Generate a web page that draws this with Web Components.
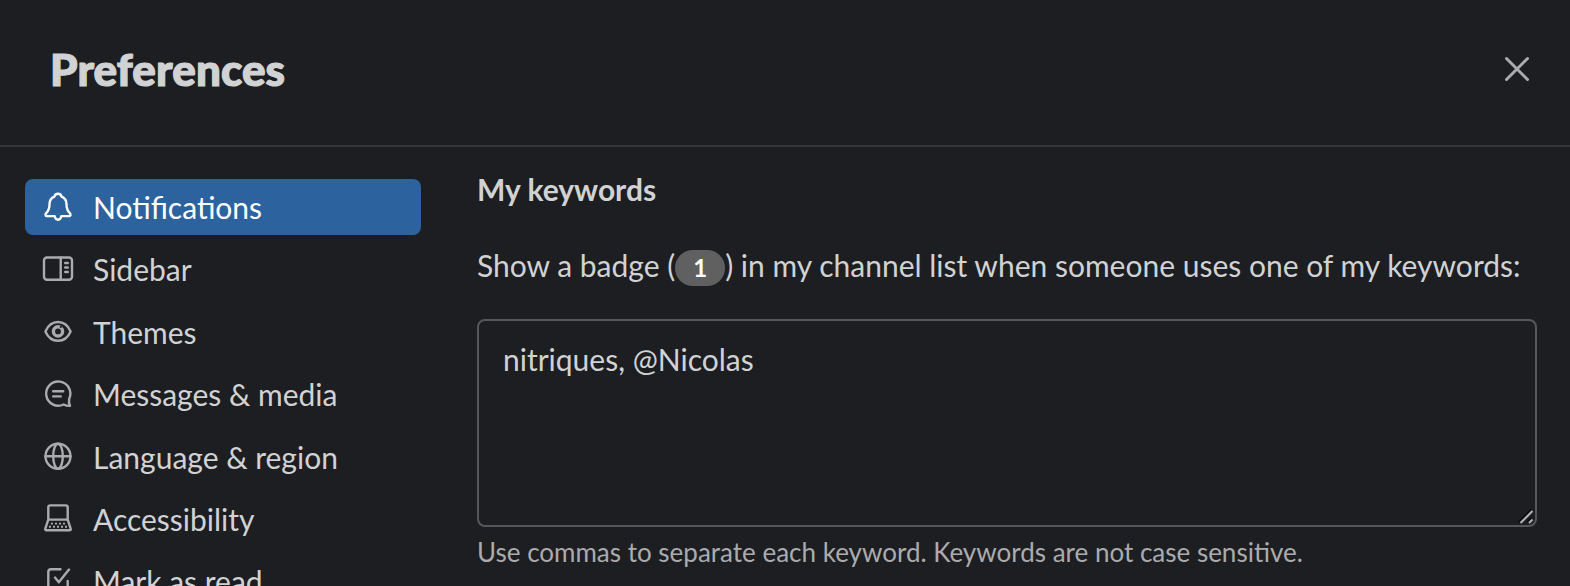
<!DOCTYPE html>
<html lang="en">
<head>
<meta charset="utf-8">
<title>Preferences</title>
<style>
html,body{margin:0;height:100%;background:#1d1e22;overflow:hidden}
body{font-family:Lato,sans-serif;color:#d1d2d3;font-size:30px}
</style>
</head>
<body>
<pref-dialog>
  <span slot="title">Preferences</span>
  <pref-item slot="nav" icon="bell" active>Notifications</pref-item>
  <pref-item slot="nav" icon="sidebar">Sidebar</pref-item>
  <pref-item slot="nav" icon="eye">Themes</pref-item>
  <pref-item slot="nav" icon="message">Messages &amp; media</pref-item>
  <pref-item slot="nav" icon="globe">Language &amp; region</pref-item>
  <pref-item slot="nav" icon="laptop">Accessibility</pref-item>
  <pref-item slot="nav" icon="check">Mark as read</pref-item>
  <keyword-section>
    <span slot="heading">My keywords</span>
    <span slot="label">Show a badge (<count-badge>1</count-badge>) in my channel list when someone uses one of my keywords:</span>
    <keyword-box>nitriques, @Nicolas</keyword-box>
    <span slot="hint">Use commas to separate each keyword. Keywords are not case sensitive.</span>
  </keyword-section>
</pref-dialog>
<script>
const ICONS = {
  bell: '<path d="M20 6.8c-1.9 0-3.2 1.2-3.5 2.8-3.5 1.3-5 4.2-5 7.600 0 4.600-.9 6.500-3.300 8.900-1.300 1.300-.8 3 .8 3h7.700c.4 2.300 1.600 3.600 3.300 3.600s2.900-1.300 3.300-3.600H31c1.600 0 2.100-1.700.8-3-2.400-2.400-3.300-4.300-3.300-8.900 0-3.400-1.500-6.300-5-7.600-.3-1.600-1.600-2.800-3.500-2.800Z"/>',
  sidebar: '<rect x="6" y="8.500" width="28" height="22.300" rx="3"/><path d="M22.700 8.500v22.300M27.200 14h2.600M27.200 18.500h2.600M27.200 23h2.600"/>',
  eye: '<path d="M7.400 20.400C10 14.400 14.500 11 20 11S30 14.400 32.600 20.400C30 26.400 25.500 29.700 20 29.700S10 26.400 7.400 20.400Z"/><circle cx="20" cy="20.400" r="4.600" stroke-width="3.400"/><circle cx="22.800" cy="16" r="1.100" fill="#1d1e22" stroke="none"/>',
  message: '<path d="M31.200 24.800A12.100 12.100 0 1 0 25.600 30.500C27.700 31.500 30 32 32 31.900 31 29.900 30.700 27.200 31.200 24.800Z"/><path d="M15.200 17.200h10M15.200 22.400h7.500"/>',
  globe: '<circle cx="20" cy="20.200" r="12.500"/><ellipse cx="20" cy="20.200" rx="4.800" ry="12.500"/><path d="M7.500 20.200h25"/>',
  laptop: '<path d="M10.300 21.600V9.400c0-1.400.6-2 2-2h15.400c1.400 0 2 .6 2 2v12.200M10.300 21.600h19.400l2.900 8.700c.4 1.300 0 2-1.200 2H8.600c-1.200 0-1.600-.7-1.200-2Z"/><path stroke-width="1.900" stroke-linecap="butt" stroke-dasharray="2 2" d="M13 25.600h14M11 28.800h18"/>',
  check: '<path d="M22.500 8.200H13c-1.800 0-2.700.9-2.700 2.700v18c0 1.800.9 2.700 2.700 2.700h14c1.800 0 2.700-.9 2.700-2.700V20M17 16.600l3.800 4.600L31 8.600"/>'
};
const define = (name, html, setup) => customElements.define(name, class extends HTMLElement {
  constructor() {
    super();
    this.attachShadow({ mode: 'open' }).innerHTML = html;
  }
  connectedCallback() { if (setup) setup(this); }
});

define('close-button', `<style>
:host{display:block;width:28px;height:28px}
svg{display:block;width:28px;height:28px;fill:none;stroke:#ababad;stroke-width:3;stroke-linecap:round}
</style><svg viewBox="0 0 28 28"><path d="M3.500 3.500l21 21M24.500 3.500l-21 21"/></svg>`);

define('pref-item', `<style>
:host{display:flex;align-items:center;box-sizing:border-box;height:56px;padding-left:13px;border-radius:8px;line-height:56px;white-space:nowrap;color:#d1d2d3;--ink:#ababad}
:host([active]){background:#2c639e;color:#fff;--ink:#fff}
svg{flex:none;width:40px;height:40px;margin:-1px 15px 0 0;fill:none;stroke:var(--ink);stroke-width:2.400;stroke-linecap:round;stroke-linejoin:round}
</style><svg viewBox="0 0 40 40"></svg><span><slot></slot></span>`,
  el => { el.shadowRoot.querySelector('svg').innerHTML = ICONS[el.getAttribute('icon')]; });

define('count-badge', `<style>
:host{display:inline-flex;justify-content:center;align-items:center;width:50px;height:36px;border-radius:18px;background:#616061;color:#fff;font-size:24px;font-weight:700;line-height:36px;vertical-align:baseline;margin:-8px 0}
</style><slot></slot>`);

define('keyword-box', `<style>
:host{display:flex;justify-content:space-between;box-sizing:border-box;height:208px;border:2px solid #565759;border-radius:8px;padding:16px 1px 1px 24px;line-height:44px}
svg{align-self:flex-end;width:16px;height:16px;stroke:#b4b4b6;stroke-width:2}
.shade{stroke:#0c0c0e}
</style><slot></slot><svg viewBox="0 0 16 16"><path class="shade" d="M1 14L13.500 1.500M9.500 14l4-4"/><path d="M2.500 15l12-12M11 15l3.500-3.500"/></svg>`);

define('keyword-section', `<style>
:host{display:block}
.heading{font-weight:700;line-height:44px}
.label{line-height:44px;margin:32px 0;white-space:nowrap}
.hint{font-size:26px;line-height:36px;margin-top:7px;color:#ababad;white-space:nowrap}
</style><div class="heading"><slot name="heading"></slot></div><div class="label"><slot name="label"></slot></div><slot></slot><div class="hint"><slot name="hint"></slot></div>`);

define('pref-dialog', `<style>
:host{display:flex;flex-direction:column;height:100vh;overflow:hidden}
header{flex:none;display:flex;justify-content:space-between;box-sizing:border-box;height:147px;padding:39px 39px 0 50px;border-bottom:2px solid #35373b}
h1{margin:0;font-size:44px;font-weight:900;line-height:60px;letter-spacing:.1px;-webkit-text-stroke:1.200px #d1d2d3}
close-button{margin-top:16px}
main{flex:1;min-height:0;display:grid;grid-template-columns:396px 1060px;column-gap:56px;padding-left:25px}
nav{display:flex;flex-direction:column;gap:6.400px;padding-top:32px}
section{padding-top:20px}
</style><header><h1><slot name="title"></slot></h1><close-button></close-button></header><main><nav><slot name="nav"></slot></nav><section><slot></slot></section></main>`);
</script>
</body>
</html>
